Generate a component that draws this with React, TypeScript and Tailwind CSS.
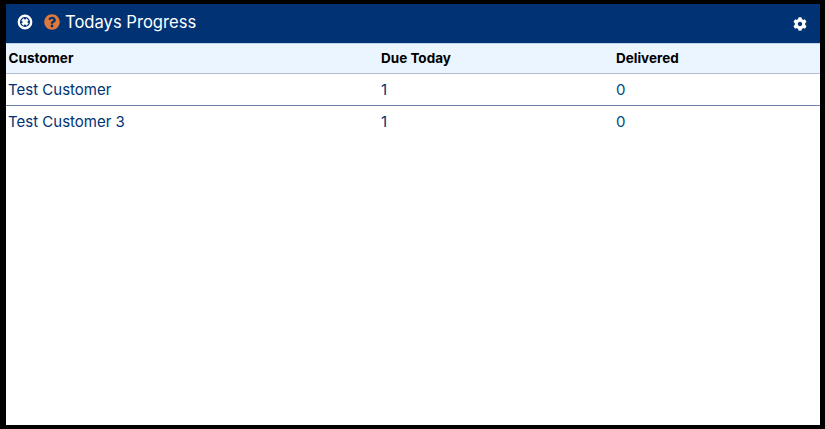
import { FaCog, FaQuestionCircle } from "react-icons/fa";

const rows = [
  { name: "Test Customer", due: "1", delivered: "0" },
  { name: "Test Customer 3", due: "1", delivered: "0" },
];

function CloseIcon() {
  return (
    <svg width="16" height="16" viewBox="0 0 16 16" className="block">
      <circle cx="8" cy="8" r="6.2" fill="none" stroke="#ffffff" strokeWidth="2.4" />
      <path d="M5.4 5.4 L10.6 10.6 M10.6 5.4 L5.4 10.6" stroke="#ffffff" strokeWidth="3" />
    </svg>
  );
}

export default function App() {
  return (
    <div className="h-[429px] w-[825px] bg-black pt-1 pb-1 pl-[6px] pr-[5px] font-['Inter','Liberation_Sans',sans-serif]">
      <div className="flex h-full flex-col bg-white">
        <div className="flex h-[40px] items-center border-b border-[#c3d3e6] bg-[#003274] pb-[4px] pl-[11px] pr-[14px]">
          <CloseIcon />
          <FaQuestionCircle className="ml-[11px] text-[16px] text-[#e0793a]" />
          <span className="ml-[5px] text-[16.6px] leading-6 text-white">Todays Progress</span>
          <FaCog className="ml-auto mr-[-1px] mt-[4px] text-[14px] text-white" />
        </div>
        <div className="grid h-[30px] grid-cols-[372px_235px_1fr] items-center border-b border-[#b4bfd6] bg-[#eaf5ff] pb-[2px] text-[13.5px] font-bold leading-5 text-black">
          <div className="pl-[2.5px]">Customer</div>
          <div className="pl-[3px]">Due Today</div>
          <div className="pl-[3px]">Delivered</div>
        </div>
        {rows.map((r, i) => (
          <div
            key={r.name}
            className={`grid h-8 grid-cols-[372px_235px_1fr] items-center text-[15px] leading-5 text-[#003274] ${i === 0 ? "border-b border-[#6e82aa]" : ""}`}
          >
            <div className="pl-[2px]">{r.name}</div>
            <div className="pl-[3px]">{r.due}</div>
            <div className="pl-[3px] text-[#004a80]">{r.delivered}</div>
          </div>
        ))}
      </div>
    </div>
  );
}
